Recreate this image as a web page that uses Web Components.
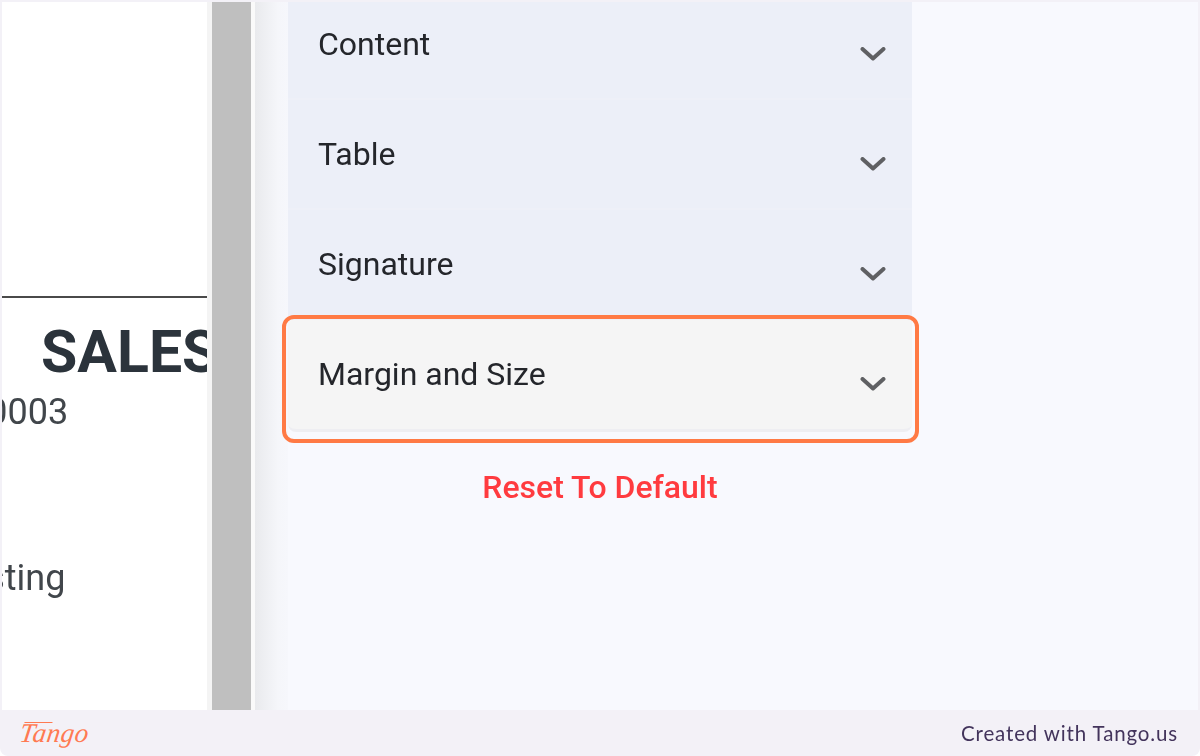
<!DOCTYPE html>
<html lang="en">
<head>
<meta charset="utf-8">
<title>Margin and Size</title>
<style>
  html, body { margin: 0; height: 100%; background: #fff; }
  body { overflow: hidden; }
</style>
</head>
<body>
<step-page>
  <doc-preview></doc-preview>
  <scroll-gutter></scroll-gutter>
  <settings-panel>
    <accordion-row first>Content</accordion-row>
    <accordion-row>Table</accordion-row>
    <accordion-row>Signature</accordion-row>
    <accordion-row highlighted>Margin and Size</accordion-row>
  </settings-panel>
</step-page>
<tango-footer></tango-footer>

<script>
class StepPage extends HTMLElement {
  constructor() {
    super();
    this.attachShadow({ mode: "open" }).innerHTML = `
      <style>
        :host {
          display: flex;
          height: 708px;
          padding: 2px 2px 0 2px;
          background: #f3f1f7;
          overflow: hidden;
        }
      </style>
      <slot></slot>
    `;
  }
}

class DocPreview extends HTMLElement {
  constructor() {
    super();
    this.attachShadow({ mode: "open" }).innerHTML = `
      <style>
        :host {
          display: block;
          width: 205px;
          flex: none;
          background: #fff;
          overflow: hidden;
          white-space: nowrap;
          color: #41464b;
          font-family: Roboto, "Liberation Sans", sans-serif;
          font-size: 36px;
        }
        .rule { height: 2px; background: #4a4a4a; margin-top: 294px; }
        .title {
          margin: 24px 0 0 39px;
          font: bold 59px/60px Roboto, "Liberation Sans", sans-serif;
          color: #2b333b;
          filter: blur(0.4px);
        }
        .num { margin: 6px 0 0 -35px; line-height: 48px; filter: blur(0.4px); }
        .dept { margin: 118px 0 0 -44px; line-height: 48px; filter: blur(0.4px); }
      </style>
      <div class="rule"></div>
      <div class="title">SALES</div>
      <div class="num">10003</div>
      <div class="dept">Listing</div>
    `;
  }
}

class ScrollGutter extends HTMLElement {
  constructor() {
    super();
    this.attachShadow({ mode: "open" }).innerHTML = `
      <style>
        :host {
          width: 81px;
          flex: none;
          display: grid;
          grid-template-columns: 5px 39px 4px 1fr;
        }
        .edge { background: #f4f4f4; }
        .bar { background: #bfbfbf; }
        .lip { background: #fafafa; }
        .fade { background: linear-gradient(90deg, #e9eaed, #f5f6fa 70%, #f6f7fc); }
      </style>
      <div class="edge"></div>
      <div class="bar"></div>
      <div class="lip"></div>
      <div class="fade"></div>
    `;
  }
}

class SettingsPanel extends HTMLElement {
  constructor() {
    super();
    this.attachShadow({ mode: "open" }).innerHTML = `
      <style>
        :host {
          display: block;
          flex: 1;
          background: #f8f9fe;
        }
        .rows { width: 624px; }
        .reset {
          width: 624px;
          margin-top: 35px;
          text-align: center;
          color: #ff3b3f;
          font: 500 32px/40px Roboto, "Liberation Sans", sans-serif;
          filter: blur(0.4px);
        }
      </style>
      <div class="rows"><slot></slot></div>
      <div class="reset">Reset To Default</div>
    `;
  }
}

class AccordionRow extends HTMLElement {
  constructor() {
    super();
    this.attachShadow({ mode: "open" }).innerHTML = `
      <style>
        :host {
          display: flex;
          position: relative;
          justify-content: space-between;
          height: 110px;
          box-sizing: border-box;
          padding: 34px 26px 0 30px;
          background: #eceff8;
          border-bottom: 2px solid #eef0f8;
          color: #24262b;
          font: 400 32px/40px Roboto, "Liberation Sans", sans-serif;
        }
        .text { filter: blur(0.4px); }
        svg { margin-top: 22px; width: 26px; height: 16px; filter: blur(0.5px); }
        :host([first]) { height: 98px; padding-top: 22px; }
        :host([highlighted]) {
          background: #f5f5f5;
          border-radius: 0 0 8px 8px;
          border-bottom: 3px solid #eeeef2;
          height: 112px;
        }
        /* orange callout drawn over the row */
        .callout {
          display: none;
          position: absolute;
          inset: -5.5px -6.5px -14px -6.5px;
          border: 4px solid #ff7a45;
          border-radius: 12px;
        }
        :host([highlighted]) .callout { display: block; }
      </style>
      <span class="text"><slot></slot></span>
      <svg viewBox="0 0 26 16" fill="none" stroke="#5f6063" stroke-width="4" stroke-linecap="round" stroke-linejoin="round">
        <path d="M2.5 3 L13 12.5 L23.5 3"/>
      </svg>
      <div class="callout"></div>
    `;
  }
}

class TangoFooter extends HTMLElement {
  constructor() {
    super();
    this.attachShadow({ mode: "open" }).innerHTML = `
      <style>
        :host {
          display: flex;
          justify-content: space-between;
          height: 46px;
          padding: 0 22px 0 20px;
          background: #f3f1f7;
          border-radius: 0 0 8px 8px;
        }
        .logo {
          position: relative;
          color: #ff7a52;
          font: italic 400 27px/46px "Liberation Serif", serif;
          letter-spacing: 0.5px;
          transform: skewX(-8deg);
        }
        /* long top stroke of the script T */
        .logo::before {
          content: "";
          position: absolute;
          left: 3px;
          top: 12px;
          width: 28px;
          height: 1px;
          background: #ff7a52;
        }
        .credit {
          color: #43345c;
          font: 400 20.5px/46px Lato, "Open Sans", sans-serif;
          letter-spacing: 0.85px;
          filter: blur(0.3px);
        }
      </style>
      <span class="logo">Tango</span>
      <span class="credit">Created with Tango.us</span>
    `;
  }
}

customElements.define("step-page", StepPage);
customElements.define("doc-preview", DocPreview);
customElements.define("scroll-gutter", ScrollGutter);
customElements.define("settings-panel", SettingsPanel);
customElements.define("accordion-row", AccordionRow);
customElements.define("tango-footer", TangoFooter);
</script>
</body>
</html>
